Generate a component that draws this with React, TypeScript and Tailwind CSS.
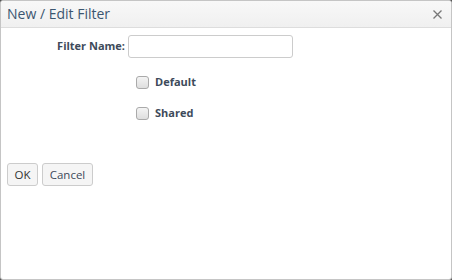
export default function App() {
  return (
    <div className="w-[452px] h-[280px] bg-[#555] overflow-hidden" style={{ fontFamily: '"Open Sans", "Noto Sans", sans-serif' }}>
      <div className="w-full h-full bg-white border border-[#c5c5c5] rounded-[3px] flex flex-col overflow-hidden">
        <div className="h-[27px] shrink-0 flex items-center justify-between bg-gradient-to-b from-[#f8f8f8] to-[#f0f0f0] border-b border-[#dddddd] pl-[6px] pr-[9px]">
          <span className="text-[14px] text-[#3b5670] leading-none">New / Edit Filter</span>
          <svg width="9" height="9" viewBox="0 0 9 9" className="mt-[1px]">
            <path d="M0.5 0.5 L8.5 8.5 M8.5 0.5 L0.5 8.5" stroke="#777" strokeWidth="1.3" />
          </svg>
        </div>
        <div className="flex flex-col pt-[7px]">
          <div className="flex items-center h-[22px]">
            <label className="w-[127px] text-right pr-[3px] text-[11px] font-bold text-[#3d4a5a]">Filter Name:</label>
            <input className="w-[165px] h-[23px] border border-[#cccccc] rounded-[3px] outline-none px-1 text-[12px]" />
          </div>
          <div className="flex items-center h-[12px] mt-[19px] pl-[135px]">
            <span className="w-[13px] h-[13px] border border-[#aaaaaa] rounded-[3px] bg-gradient-to-b from-[#f4f4f4] to-[#dedede]" />
            <span className="ml-[6px] text-[11px] font-bold text-[#3d4a5a]">Default</span>
          </div>
          <div className="flex items-center h-[12px] mt-[19px] pl-[135px]">
            <span className="w-[13px] h-[13px] border border-[#aaaaaa] rounded-[3px] bg-gradient-to-b from-[#f4f4f4] to-[#dedede]" />
            <span className="ml-[6px] text-[11px] font-bold text-[#3d4a5a]">Shared</span>
          </div>
          <div className="flex gap-[4px] pl-[6px] mt-[44px]">
            <button className="h-[23px] w-[31px] border border-[#cccccc] rounded-[3px] bg-[#f5f5f5] text-[11.5px] text-[#333]">OK</button>
            <button className="h-[23px] w-[51px] border border-[#cccccc] rounded-[3px] bg-[#f5f5f5] text-[11.5px] text-[#3d4a5a]">Cancel</button>
          </div>
        </div>
      </div>
    </div>
  );
}
